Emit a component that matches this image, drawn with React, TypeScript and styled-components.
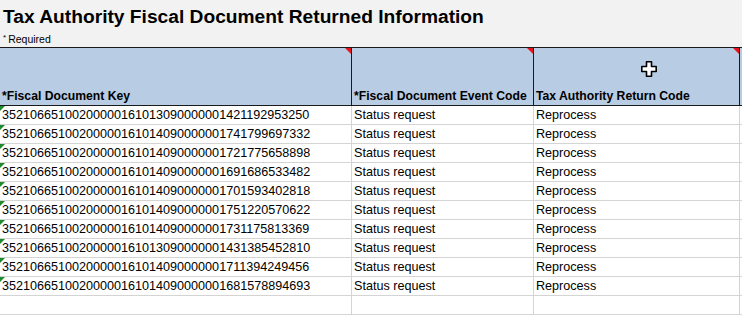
import styled, { createGlobalStyle } from "styled-components";

// ─── Global ───────────────────────────────────────────────────────────────────

const Global = createGlobalStyle`
  html, body { margin: 0; padding: 0; background: #fff; }
  body { font-family: "Liberation Sans", Arial, sans-serif; color: #000; }
`;

// ─── Styled components ────────────────────────────────────────────────────────

const Sheet = styled.div`
  position: relative;
  width: 742px;
  height: 315px;
  overflow: hidden;
  background: #fff;
`;

const TitleBar = styled.div`
  height: 47px;
  background: #f2f2f2;
  padding: 0 0 0 3px;
  box-sizing: border-box;
  display: flex;
  flex-direction: column;
`;

const Title = styled.h1`
  margin: 0;
  padding-top: 6px;
  font-size: 19.2px;
  line-height: 22px;
  font-weight: 700;
  white-space: nowrap;
`;

const Required = styled.div`
  margin-top: 4px;
  font-size: 10.5px;
  line-height: 12px;
  sup { font-size: 8px; vertical-align: 3px; margin-right: 2px; }
`;

const Grid = styled.div`
  display: grid;
  grid-template-columns: 352px 182px 206px 1fr;
`;

const HeadCell = styled.div`
  position: relative;
  height: 57px;
  background: #b8cce4;
  border-top: 1px solid #1a1a1a;
  border-bottom: 1px solid #1a1a1a;
  border-right: 1px solid #1a1a1a;
  display: flex;
  align-items: flex-end;
  padding: 0 2px;
  font-size: 12.2px;
  font-weight: 700;
  line-height: 18px;
  white-space: nowrap;
  overflow: hidden;
`;

const CommentMark = styled.span`
  position: absolute;
  top: 0;
  right: 0;
  width: 0;
  height: 0;
  border-top: 6px solid #e8141b;
  border-left: 6px solid transparent;
`;

const Cell = styled.div`
  position: relative;
  height: 18px;
  border-bottom: 1px solid #d4d4d4;
  border-right: 1px solid #d4d4d4;
  padding: 0 2px;
  font-size: 12.6px;
  line-height: 18px;
  white-space: nowrap;
  overflow: hidden;
`;

const TextMark = styled.span`
  position: absolute;
  top: 0;
  left: 0;
  width: 0;
  height: 0;
  border-top: 5px solid #1f8a2e;
  border-right: 5px solid transparent;
`;

const Cursor = styled.svg`
  position: absolute;
  left: 641px;
  top: 61px;
`;

// ─── Data ─────────────────────────────────────────────────────────────────────

const keys = [
  "35210665100200000161013090000001421192953250",
  "35210665100200000161014090000001741799697332",
  "35210665100200000161014090000001721775658898",
  "35210665100200000161014090000001691686533482",
  "35210665100200000161014090000001701593402818",
  "35210665100200000161014090000001751220570622",
  "35210665100200000161014090000001731175813369",
  "35210665100200000161013090000001431385452810",
  "35210665100200000161014090000001711394249456",
  "35210665100200000161014090000001681578894693",
];

const headers = [
  "*Fiscal Document Key",
  "*Fiscal Document Event Code",
  "Tax Authority Return Code",
  "",
];

// ─── Composant ────────────────────────────────────────────────────────────────

export default function App() {
  return (
    <Sheet>
      <Global />
      <TitleBar>
        <Title>Tax Authority Fiscal Document Returned Information</Title>
        <Required><sup>*</sup>Required</Required>
      </TitleBar>

      <Grid>
        {headers.map((h, i) => (
          <HeadCell key={i}>
            {h}
            {i < 3 && <CommentMark />}
          </HeadCell>
        ))}

        {keys.map((k) => [
          <Cell key={k + "a"}><TextMark />{k}</Cell>,
          <Cell key={k + "b"}>Status request</Cell>,
          <Cell key={k + "c"}>Reprocess</Cell>,
          <Cell key={k + "d"} />,
        ])}

        <Cell />
        <Cell />
        <Cell />
        <Cell />
      </Grid>

      <Cursor width="16" height="16" viewBox="0 0 16 16">
        <path
          d="M5.5 0.8h5v4.7h4.7v5h-4.7v4.7h-5v-4.7h-4.7v-5h4.7z"
          fill="#fff"
          stroke="#000"
          strokeWidth="1.6"
          strokeLinejoin="round"
        />
      </Cursor>
    </Sheet>
  );
}
